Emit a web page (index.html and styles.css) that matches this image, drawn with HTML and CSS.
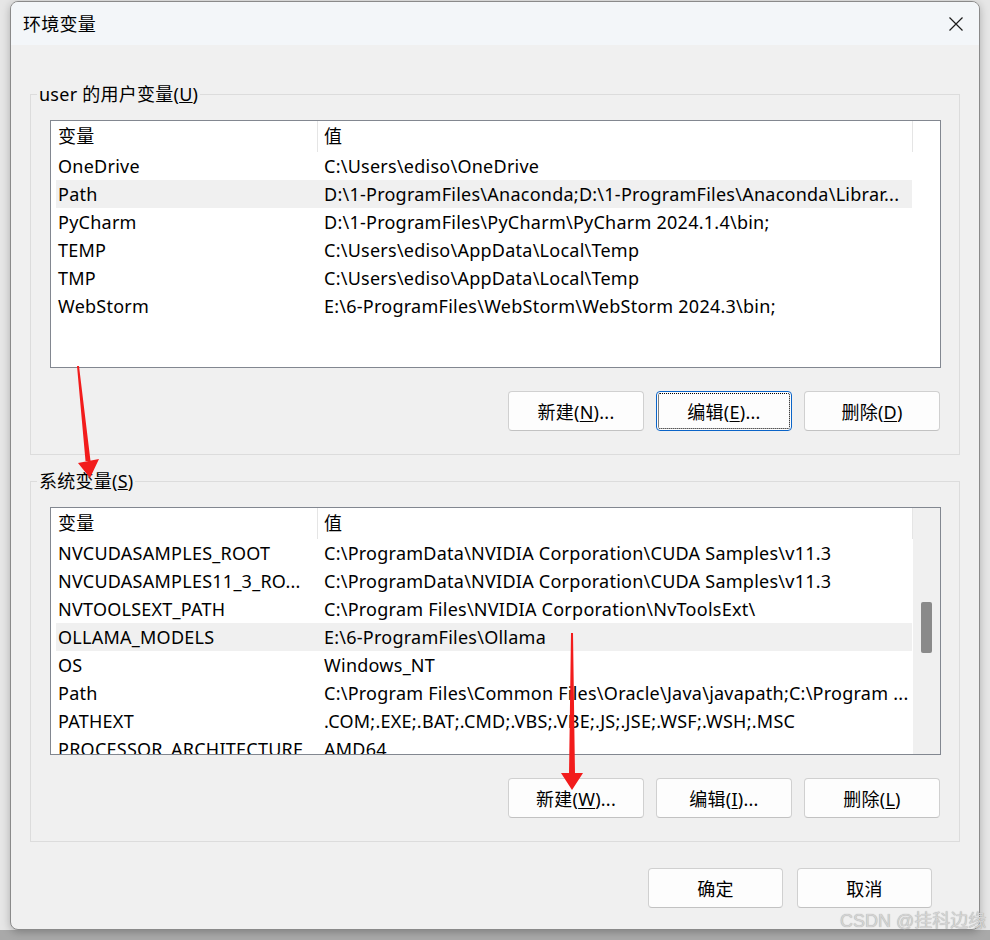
FILE: index.html
```html
<!DOCTYPE html>
<html lang="zh-CN">
<head>
    <meta charset="UTF-8">
    <title>环境变量</title>
    <link rel="stylesheet" href="styles.css">
</head>
<body>
    <div class="dialog">
        <div class="titlebar">
            <span class="title">环境变量</span>
            <span class="close">
                <svg width="14" height="14" viewBox="0 0 14 14"><path d="M0.5 0.5 13.5 13.5 M13.5 0.5 0.5 13.5" stroke="#1b1b1b" stroke-width="1.2" fill="none"/></svg>
            </span>
        </div>

        <div class="content">
            <fieldset class="group">
                <legend>user 的用户变量(<u>U</u>)</legend>
                <div class="group-body">
                    <div class="list">
                        <div class="cols">
                            <div class="head"><div class="c1">变量</div><div class="c2">值</div></div>
                            <div class="row"><div class="c1">OneDrive</div><div class="c2">C:\Users\ediso\OneDrive</div></div>
                            <div class="row sel"><div class="c1">Path</div><div class="c2">D:\1-ProgramFiles\Anaconda;D:\1-ProgramFiles\Anaconda\Librar...</div></div>
                            <div class="row"><div class="c1">PyCharm</div><div class="c2">D:\1-ProgramFiles\PyCharm\PyCharm 2024.1.4\bin;</div></div>
                            <div class="row"><div class="c1">TEMP</div><div class="c2">C:\Users\ediso\AppData\Local\Temp</div></div>
                            <div class="row"><div class="c1">TMP</div><div class="c2">C:\Users\ediso\AppData\Local\Temp</div></div>
                            <div class="row"><div class="c1">WebStorm</div><div class="c2">E:\6-ProgramFiles\WebStorm\WebStorm 2024.3\bin;</div></div>
                        </div>
                    </div>
                    <div class="buttons">
                        <button class="btn">新建(<u>N</u>)...</button>
                        <button class="btn focus">编辑(<u>E</u>)...</button>
                        <button class="btn">删除(<u>D</u>)</button>
                    </div>
                </div>
            </fieldset>

            <fieldset class="group second">
                <legend>系统变量(<u>S</u>)</legend>
                <div class="group-body">
                    <div class="list">
                        <div class="cols">
                            <div class="head"><div class="c1">变量</div><div class="c2">值</div></div>
                            <div class="row"><div class="c1">NVCUDASAMPLES_ROOT</div><div class="c2">C:\ProgramData\NVIDIA Corporation\CUDA Samples\v11.3</div></div>
                            <div class="row"><div class="c1">NVCUDASAMPLES11_3_RO...</div><div class="c2">C:\ProgramData\NVIDIA Corporation\CUDA Samples\v11.3</div></div>
                            <div class="row"><div class="c1">NVTOOLSEXT_PATH</div><div class="c2">C:\Program Files\NVIDIA Corporation\NvToolsExt\</div></div>
                            <div class="row sel"><div class="c1">OLLAMA_MODELS</div><div class="c2">E:\6-ProgramFiles\Ollama</div></div>
                            <div class="row"><div class="c1">OS</div><div class="c2">Windows_NT</div></div>
                            <div class="row"><div class="c1">Path</div><div class="c2">C:\Program Files\Common Files\Oracle\Java\javapath;C:\Program ...</div></div>
                            <div class="row"><div class="c1">PATHEXT</div><div class="c2">.COM;.EXE;.BAT;.CMD;.VBS;.VBE;.JS;.JSE;.WSF;.WSH;.MSC</div></div>
                            <div class="row"><div class="c1">PROCESSOR_ARCHITECTURE</div><div class="c2">AMD64</div></div>
                        </div>
                        <div class="vscroll"><div class="thumb"></div></div>
                    </div>
                    <div class="buttons">
                        <button class="btn">新建(<u>W</u>)...</button>
                        <button class="btn">编辑(<u>I</u>)...</button>
                        <button class="btn">删除(<u>L</u>)</button>
                    </div>
                </div>
            </fieldset>

            <div class="footer">
                <button class="btn wide">确定</button>
                <button class="btn wide">取消</button>
            </div>
        </div>
    </div>

    <svg class="arrows" width="990" height="940" viewBox="0 0 990 940">
        <path d="M77 366 L79 366 L90.5 461 L85.5 461 Z M78 463 L99 459 L90 478 Z" fill="#f21c1c"/>
        <path d="M571 633 L573 633 L575 774 L569 774 Z M561 773 L583 773 L572 790 Z" fill="#f21c1c"/>
    </svg>
    <div class="watermark">CSDN @挂科边缘</div>
</body>
</html>
```

FILE: styles.css
```css
html, body { height: 940px; overflow: hidden; }
body { margin: 0; position: relative; font-family: "Noto Sans", "Noto Sans CJK SC", sans-serif; font-size: 18px; letter-spacing: 0.25px; color: #000; background: linear-gradient(#e6e6e6 930px, #a9a9a9 930px); }

.dialog { margin: 1px 0 0 10px; width: 970px; height: 929px; box-sizing: border-box; border: 1px solid #8a8a8a; border-radius: 8px; background: #f0f0f0; overflow: hidden; box-shadow: 0 2px 8px rgba(0, 0, 0, 0.25); }
.titlebar { height: 43px; background: #f3f6f9; display: flex; align-items: center; justify-content: space-between; padding-left: 12px; }
.title { line-height: 24px; }
.close { width: 46px; height: 43px; display: flex; align-items: center; justify-content: center; }

.content { padding: 37px 19px 0; }
.group { margin: 0; padding: 0; border: 1px solid #dcdcdc; min-width: 0; }
.group.second { margin-top: 14px; }
.group legend { margin-left: 6px; padding: 0 2px; line-height: 24px; }
.group-body { padding: 14px 18px 23px 19px; }

.list { width: 891px; height: 248px; box-sizing: border-box; border: 1px solid #828790; background: #fff; display: flex; overflow: hidden; }
.cols { width: 862px; flex: none; }
.head { height: 31px; line-height: 31px; display: flex; padding-left: 5px; box-sizing: border-box; border-right: 1px solid #e5e5e5; }
.head .c1 { border-right: 1px solid #e5e5e5; }
.row { height: 28px; line-height: 28px; display: flex; margin-left: 5px; width: 856px; }
.row.sel { background: #f0f0f0; }
.c1 { width: 262px; flex: none; box-sizing: border-box; padding-left: 2px; white-space: nowrap; overflow: hidden; }
.c2 { flex: 1; padding-left: 6px; white-space: nowrap; overflow: hidden; }
.vscroll { flex: 1; background: #f0f0f0; }
.thumb { margin: 94px 0 0 8px; width: 11px; height: 51px; background: #8a8a8a; border-radius: 2px; }

.buttons { display: flex; justify-content: flex-end; gap: 12px; margin-top: 23px; padding-right: 1px; }
.btn { width: 136px; height: 40px; padding: 0; font: inherit; letter-spacing: inherit; color: #000; background: #fdfdfd; border: 1px solid #d0d0d0; border-bottom-color: #c2c2c2; border-radius: 4px; }
.btn u { text-underline-offset: 2px; }
.btn.focus { border-color: #0a64c8; outline: 1px dotted #000; outline-offset: -3px; }
.btn.wide { width: 135px; }
.footer { display: flex; justify-content: flex-end; gap: 14px; margin-top: 26px; padding-right: 28px; }

.arrows { position: absolute; left: 0; top: 0; pointer-events: none; }
.watermark { position: absolute; left: 840px; top: 909px; font-family: "Liberation Sans", "Noto Sans CJK SC", sans-serif; font-size: 18px; line-height: 24px; letter-spacing: 0; color: #d4d4d4; text-shadow: 0 0 1px #9a9a9a; white-space: nowrap; }
```
